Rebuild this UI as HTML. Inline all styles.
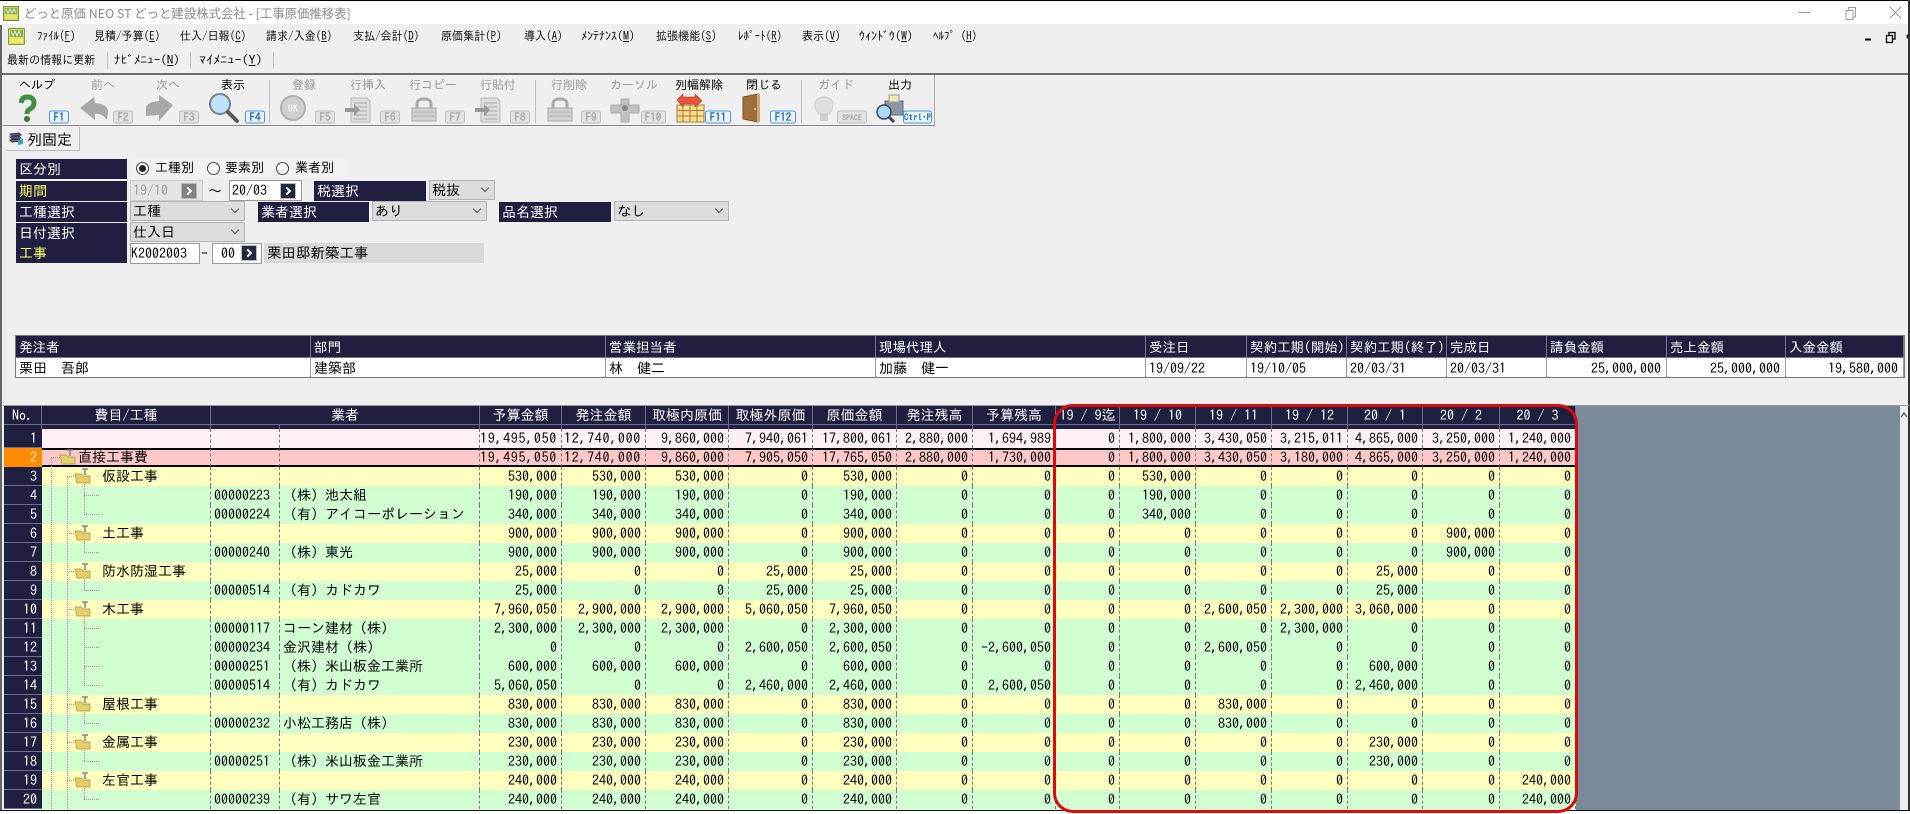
<!DOCTYPE html>
<html lang="ja"><head><meta charset="utf-8"><title>工事原価推移表</title>
<style>
html,body{margin:0;padding:0}
body{width:1910px;height:814px;overflow:hidden;background:#efefef;position:relative;font-family:"IPAGothic","Liberation Mono","Noto Sans CJK JP",monospace;color:#000}
.a{position:absolute}
#title{left:0;top:0;width:1910px;height:24px;background:#fff;border-top:1px solid #000;box-sizing:border-box}
#tt{left:24px;top:5px;font:12.4px/16px "Noto Sans CJK JP","Liberation Sans",sans-serif;color:#8a8a8a;white-space:nowrap}
.m{position:absolute;font-size:12px;line-height:14px;white-space:nowrap;transform:scaleX(.92);transform-origin:0 0;color:#111}
.sp{position:absolute;width:1px;height:17px;background:#c4c4c4;top:52px}
.lb{position:absolute;background:#1f2040;color:#fff;font-size:14px;line-height:21px;padding-left:3px;box-sizing:border-box;height:20px;white-space:nowrap;overflow:hidden}
.y{color:#ffff66}
.sel{position:absolute;height:20px;background:#dcdcdc;border:1px solid #b4b4b4;box-sizing:border-box;font-size:14px;line-height:18px;padding-left:2px}
.sel:after{content:"";position:absolute;right:6px;top:4px;width:5px;height:5px;border-right:1px solid #555;border-bottom:1px solid #555;transform:rotate(45deg)}
.inp{position:absolute;height:21px;background:#fff;border:1px solid #999;box-sizing:border-box;font-size:14px;line-height:19px;padding-left:2px}
.btn{position:absolute;width:16px;height:16px;background:#1f2a40;border:1px solid #bbb;box-sizing:border-box}
.btn:after{content:"";position:absolute;left:3px;top:4px;width:4px;height:4px;border-right:2px solid #fff;border-top:2px solid #fff;transform:rotate(45deg)}
.rd{position:absolute;width:11px;height:11px;border:1px solid #444;border-radius:50%;background:#fff;box-sizing:content-box}
.rl{position:absolute;font-size:13px;line-height:16px;white-space:nowrap}
#info{position:absolute;left:15px;top:335px;border-collapse:separate;border-spacing:0;table-layout:fixed;width:1890px;border:1px solid #777;box-sizing:border-box}
#info th{background:#1f2040;color:#fff;font-weight:normal;font-size:13.5px;height:21px;padding:0 0 0 3px;text-align:left;border-right:1px solid #778;white-space:nowrap;overflow:hidden;border-bottom:1px solid #778}
#info td{background:#fff;font-size:14px;height:19px;padding:0 0 0 3px;border-right:1px solid #999;white-space:nowrap;overflow:hidden}
#info td.r{text-align:right;padding:0 5px 0 0}
#grid{position:absolute;left:4px;top:406px;width:1572px;border-collapse:separate;border-spacing:0;table-layout:fixed;font-size:14px}
#grid th{background:#1f2040;color:#fff;font-weight:normal;height:18px;padding:0;text-align:center;border-right:1px solid #6e6e90;white-space:nowrap;overflow:hidden;line-height:17px;box-sizing:border-box}
#grid .st th{height:5px;border-top:1px solid #6e6e90;font-size:0;line-height:0}
#grid td{height:19px;padding:0 4px 0 0;text-align:right;border-right:1px dashed #777;white-space:nowrap;overflow:hidden;box-sizing:border-box;line-height:17px}
#grid td.n{background:#1f2040;color:#fff;border-right:0;border-bottom:1px solid #6e6e90;padding-right:5px}
#grid td.l{text-align:left;padding:0 0 0 3px}
#grid td.t{text-align:left;padding:0 0 0 98px;font-size:14px}
#grid td.w{letter-spacing:.7px}
.p td{background:#fff0f5}
.q td{background:#ffc8c8;border-top:2px solid #000;border-bottom:2px solid #000;line-height:15px!important}
.g td{background:#ffffc0}
.k td{background:#d2ffd2}
#grid .q td.n{background:#ff8c00;color:#ffe8c0;border-top:0;border-bottom:0;line-height:17px!important}
svg text{font-family:"IPAGothic","Noto Sans CJK JP",monospace}
</style></head><body>

<div class="a" id="title"></div>
<svg class="a" style="left:3px;top:6px" width="16" height="15" viewBox="0 0 16 15"><rect x=".5" y=".5" width="15" height="14" fill="#c9d65a" stroke="#7d8a3a"/><path d="M2 2h12v6H2z" fill="#7fae5a"/><path d="M3 3l2 4 2-4 2 4 2-4 2 4" fill="none" stroke="#e8f0c8"/><rect x="2" y="9" width="12" height="4" fill="#efe070"/></svg>
<div class="a" id="tt">どっと原価 NEO ST どっと建設株式会社 - [工事原価推移表]</div>
<svg class="a" style="left:1795px;top:4px" width="115" height="20"><path d="M4 8.500H15" stroke="#999"/><path d="M51 6.500h7v9h-7zM53.500 6V3.500H60.500V13H58" fill="none" stroke="#999"/><path d="M95 3l11 11M106 3L95 14" stroke="#999" fill="none"/></svg>

<svg class="a" style="left:8px;top:28px" width="17" height="17" viewBox="0 0 17 17"><rect x=".5" y=".5" width="16" height="16" rx="1" fill="#d4dc60" stroke="#8a9a40"/><path d="M2 2h13v7H2z" fill="#7fae5a"/><path d="M3 3l2 5 2-5 2 5 2-5 2 5" fill="none" stroke="#e8f0c8"/><rect x="2" y="10" width="13" height="5" fill="#f2e670"/></svg>
<span class="m" style="left:37px;top:29px">ﾌｧｲﾙ(<u>F</u>)</span>
<span class="m" style="left:94px;top:29px">見積/予算(<u>E</u>)</span>
<span class="m" style="left:180px;top:29px">仕入/日報(<u>C</u>)</span>
<span class="m" style="left:266px;top:29px">請求/入金(<u>B</u>)</span>
<span class="m" style="left:353px;top:29px">支払/会計(<u>D</u>)</span>
<span class="m" style="left:441px;top:29px">原価集計(<u>P</u>)</span>
<span class="m" style="left:524px;top:29px">導入(<u>A</u>)</span>
<span class="m" style="left:581px;top:29px;transform:scaleX(1)">ﾒﾝﾃﾅﾝｽ(<u>M</u>)</span>
<span class="m" style="left:656px;top:29px">拡張機能(<u>S</u>)</span>
<span class="m" style="left:738px;top:29px">ﾚﾎﾟｰﾄ(<u>R</u>)</span>
<span class="m" style="left:802px;top:29px">表示(<u>V</u>)</span>
<span class="m" style="left:859px;top:29px;transform:scaleX(1)">ｳｨﾝﾄﾞｳ(<u>W</u>)</span>
<span class="m" style="left:933px;top:29px">ﾍﾙﾌﾟ (<u>H</u>)</span>
<svg class="a" style="left:1860px;top:29px" width="50" height="16"><path d="M5 10.500h6" stroke="#000" stroke-width="2"/><path d="M26.500 6.500h6v7h-6zM29 6V3.500H35V10H33" fill="none" stroke="#000" stroke-width="1.300"/><path d="M47 6l3 3M50 6l-3 3" stroke="#000" stroke-width="2"/></svg>

<span class="m" style="left:7px;top:53px">最新の情報に更新</span><i class="sp" style="left:107px"></i>
<span class="m" style="left:114px;top:53px;transform:scaleX(1.1)">ﾅﾋﾞﾒﾆｭｰ(<u>N</u>)</span><i class="sp" style="left:190px"></i>
<span class="m" style="left:199px;top:53px;transform:scaleX(1.18)">ﾏｲﾒﾆｭｰ(<u>Y</u>)</span><i class="sp" style="left:273px"></i>

<div class="a" style="left:0;top:73px;width:1910px;height:2px;background:#6e6e6e"></div>
<div class="a" style="left:3px;top:75px;width:932px;height:51px;border-right:1px solid #aaa;border-bottom:1px solid #888;box-sizing:border-box"></div>
<div class="a" style="left:0;top:25px;width:2px;height:785px;background:#666"></div>
<div class="a" style="left:1908px;top:0;width:2px;height:810px;background:#333"></div>

<svg class="a" style="left:0;top:75px" width="940" height="52" viewBox="0 75 940 52">
<defs>
<g id="docu"><path d="M6 1h16l3 3v21H6z" fill="#dcdcdc" stroke="#b8b8b8"/><path d="M9 6h13M9 10h13M9 14h13M9 18h13M9 22h13" stroke="#aaa"/><path d="M0 11h9V7l6 6-6 6v-4H0z" fill="#999"/></g>
<g id="lock"><path d="M7 12V7q0-5 7-5t7 5v5" fill="none" stroke="#aaa" stroke-width="3"/><rect x="2" y="11" width="24" height="13" fill="#d0d0d0" stroke="#aaa"/><path d="M4 15h20M4 19h20" stroke="#b5b5b5"/></g>
</defs>
<g font-size="12" text-anchor="middle">
<text x="37" y="89" fill="#000">ヘルプ</text>
<text x="103" y="89" fill="#999">前へ</text>
<text x="168" y="89" fill="#999">次へ</text>
<text x="233" y="89" fill="#000">表示</text>
<text x="304" y="89" fill="#999">登録</text>
<text x="368" y="89" fill="#999">行挿入</text>
<text x="433" y="89" fill="#999">行コピー</text>
<text x="498" y="89" fill="#999">行貼付</text>
<text x="569" y="89" fill="#999">行削除</text>
<text x="634" y="89" fill="#999">カーソル</text>
<text x="699" y="89" fill="#000">列幅解除</text>
<text x="764" y="89" fill="#000">閉じる</text>
<text x="836" y="89" fill="#999">ガイド</text>
<text x="900" y="89" fill="#000">出力</text>
</g>
<path d="M269.500 80v43M535.500 80v43M801.500 80v43" stroke="#bdbdbd"/>
<path d="M21 103q1-6 6-6 7 0 7 6 0 4-4 6-3 1.500-3 5" fill="none" stroke="#3f8f3f" stroke-width="5"/><circle cx="27" cy="119" r="3" fill="#2f7a34"/>
<path d="M80 108L94 97l1 6q12 1 13 8l-1 9q-5-7-12-6v6z" fill="#a8a8a8"/>
<path d="M173 105L159 95v6q-11 1-13 6v9l13-1v6z" fill="#a8a8a8"/>
<circle cx="220" cy="104" r="10" fill="#bfe4fa" stroke="#77818a" stroke-width="2"/><path d="M228 112l9 9" stroke="#5a5a5a" stroke-width="4" stroke-linecap="round"/>
<circle cx="293" cy="108" r="12" fill="#cfcfcf" stroke="#b0b0b0" stroke-width="2"/><text x="293" y="112" font-size="10" font-weight="bold" fill="#f2f2f2" text-anchor="middle">OK</text>
<use href="#docu" x="345" y="97"/><use href="#lock" x="410" y="97"/><use href="#docu" x="475" y="97"/><use href="#lock" x="546" y="97"/>
<path d="M621 99h8v6h10v8h-10v9h-8v-9h-10v-8h10z" fill="#c0c0c0" stroke="#aaa"/><circle cx="625" cy="108" r="3" fill="#888"/>
<g><rect x="677" y="105" width="27" height="17" fill="#f5e38a" stroke="#a07a50"/><path d="M677 110.500h27M677 116h27M683 105v17M690 105v17M697 105v17" stroke="#c06a40"/><path d="M677 100l6-6v3h12v-3l7 7-7 6v-3h-12v3z" fill="#e8533a" stroke="#b03020" stroke-width=".6"/></g>
<path d="M743 97l15-3v28l-15-3z" fill="#a26f3c" stroke="#7a5228"/><rect x="757" y="94" width="3" height="28" fill="#caa878"/><circle cx="755" cy="109" r="1" fill="#e8d080"/>
<path d="M819 114q-4-5-4-9 0-8 9-8t9 8q0 4-4 9z" fill="#dedede" stroke="#cfcfcf"/><rect x="820" y="114" width="8" height="7" fill="#cfcfcf"/>
<rect x="885" y="101" width="18" height="14" fill="#8a97a3" stroke="#667"/><rect x="889" y="95" width="10" height="7" fill="#eee8b0" stroke="#999"/><circle cx="884" cy="112" r="7" fill="#a9daf5" stroke="#445" stroke-width="1.500"/><path d="M889 117l5 5" stroke="#444" stroke-width="3"/>
<g font-size="11" font-weight="bold" text-anchor="middle" font-family="Liberation Sans">
<g fill="#e9f4ff" stroke="#4a96dc"><rect x="49.500" y="111" width="19" height="12" rx="2"/><rect x="245.500" y="111" width="19" height="12" rx="2"/><rect x="705.500" y="111" width="25" height="12" rx="2"/><rect x="770.500" y="111" width="25" height="12" rx="2"/><rect x="903.500" y="111" width="28" height="12" rx="2"/></g>
<g fill="#e2e2e2" stroke="#bdbdbd"><rect x="113.500" y="111" width="19" height="12" rx="2"/><rect x="179.500" y="111" width="19" height="12" rx="2"/><rect x="315.500" y="111" width="19" height="12" rx="2"/><rect x="380.500" y="111" width="19" height="12" rx="2"/><rect x="445.500" y="111" width="19" height="12" rx="2"/><rect x="510.500" y="111" width="19" height="12" rx="2"/><rect x="581.500" y="111" width="19" height="12" rx="2"/><rect x="641.500" y="111" width="24" height="12" rx="2"/><rect x="837.500" y="111" width="29" height="12" rx="2"/></g>
<g fill="#2f74bd"><text x="59" y="121">F1</text><text x="255" y="121">F4</text><text x="718" y="121">F11</text><text x="783" y="121">F12</text><text x="917.500" y="120.500" font-size="9">Ctrl·P</text></g>
<g fill="#aaa"><text x="123" y="121">F2</text><text x="189" y="121">F3</text><text x="325" y="121">F5</text><text x="390" y="121">F6</text><text x="455" y="121">F7</text><text x="520" y="121">F8</text><text x="591" y="121">F9</text><text x="653" y="121">F10</text><text x="852" y="120.500" font-size="8">SPACE</text></g>
</g>
</svg>

<div class="a" style="left:6px;top:127px;width:74px;height:24px;background:#f0f0f0;border-right:1px solid #bbb;border-bottom:1px solid #bbb;box-sizing:border-box"></div>
<svg class="a" style="left:9px;top:132px" width="16" height="14"><path d="M1 2l9-1 2 2-9 1zM1 5l9-1 2 2-9 1zM1 8l9-1 2 2-9 1z" fill="#5a6a9a" stroke="#334"/><path d="M9 8l5-1v5l-5 1z" fill="#3aa0c8"/></svg>
<span class="a" style="left:27px;top:131px;font-size:15px;line-height:17px">列固定</span>

<div class="lb" style="left:16px;top:159px;width:111px">区分別</div>
<div class="a" style="left:130px;top:159px;width:216px;height:18px;background:#f2f2f2"></div>
<span class="rd" style="left:136px;top:162px"></span><span class="a" style="left:139px;top:165px;width:7px;height:7px;border-radius:50%;background:#222"></span>
<span class="rl" style="left:155px;top:160px">工種別</span>
<span class="rd" style="left:207px;top:162px"></span><span class="rl" style="left:225px;top:160px">要素別</span>
<span class="rd" style="left:276px;top:162px"></span><span class="rl" style="left:295px;top:160px">業者別</span>

<div class="lb y" style="left:16px;top:181px;width:111px">期間</div>
<div class="a" style="left:130px;top:180px;width:73px;height:21px;background:#e4e4e4;border:1px solid #ccc;box-sizing:border-box;font-size:14px;line-height:19px;padding-left:2px;color:#999">19/10</div>
<div class="btn" style="left:181px;top:183px;background:#808080"></div>
<span class="a" style="left:208px;top:182px;font-size:14px;line-height:18px">～</span>
<div class="inp" style="left:229px;top:180px;width:73px">20/03</div>
<div class="btn" style="left:280px;top:183px"></div>
<div class="lb" style="left:314px;top:181px;width:112px">税選択</div>
<div class="sel" style="left:429px;top:180px;width:66px">税抜</div>

<div class="lb" style="left:16px;top:202px;width:111px">工種選択</div>
<div class="sel" style="left:130px;top:201px;width:115px">工種</div>
<div class="lb" style="left:258px;top:202px;width:111px">業者選択</div>
<div class="sel" style="left:372px;top:201px;width:115px">あり</div>
<div class="lb" style="left:499px;top:202px;width:112px">品名選択</div>
<div class="sel" style="left:614px;top:201px;width:115px">なし</div>

<div class="lb" style="left:16px;top:223px;width:111px">日付選択</div>
<div class="sel" style="left:130px;top:222px;width:115px">仕入日</div>

<div class="lb y" style="left:16px;top:243px;width:111px">工事</div>
<div class="inp" style="left:130px;top:243px;width:70px;padding-left:0">K2002003</div>
<span class="a" style="left:201px;top:244px;font-size:14px;line-height:18px">-</span>
<div class="inp" style="left:212px;top:243px;width:50px;padding-left:8px">00</div>
<div class="btn" style="left:241px;top:245px"></div>
<div class="a" style="left:264px;top:243px;width:220px;height:20px;background:#d9d9d9;font-size:14.5px;line-height:20px;padding-left:3px;box-sizing:border-box">栗田邸新築工事</div>

<table id="info"><colgroup><col style="width:295px"><col style="width:295px"><col style="width:270px"><col style="width:270px"><col style="width:101px"><col style="width:100px"><col style="width:100px"><col style="width:100px"><col style="width:120px"><col style="width:119px"><col></colgroup>
<tr><th>発注者</th><th>部門</th><th>営業担当者</th><th>現場代理人</th><th>受注日</th><th>契約工期(開始)</th><th>契約工期(終了)</th><th>完成日</th><th>請負金額</th><th>売上金額</th><th>入金金額</th></tr>
<tr><td>栗田　吾郎</td><td>建築部</td><td>林　健二</td><td>加藤　健一</td><td>19/09/22</td><td>19/10/05</td><td>20/03/31</td><td>20/03/31</td><td class="r">25,000,000</td><td class="r">25,000,000</td><td class="r">19,580,000</td></tr>
</table>

<div class="a" style="left:3px;top:405px;width:1907px;height:1px;background:#999"></div>
<div class="a" style="left:1576px;top:406px;width:324px;height:404px;background:#7a8a9a"></div>
<div class="a" style="left:1900px;top:406px;width:8px;height:404px;background:#eeeeee"></div>
<svg class="a" style="left:1900px;top:410px" width="8" height="10"><path d="M1 7l3-4 3 4" fill="none" stroke="#555" stroke-width="1.300"/></svg>

<table id="grid"><colgroup><col style="width:38px"><col style="width:169px"><col style="width:69px"><col style="width:200px"><col style="width:82px"><col style="width:84px"><col style="width:83px"><col style="width:84px"><col style="width:84px"><col style="width:76px"><col style="width:83px"><col style="width:64px"><col style="width:76px"><col style="width:76px"><col style="width:76px"><col style="width:75px"><col style="width:77px"><col style="width:76px"></colgroup>
<tr><th>No.</th><th>費目/工種</th><th colspan="2">業者</th><th>予算金額</th><th>発注金額</th><th>取極内原価</th><th>取極外原価</th><th>原価金額</th><th>発注残高</th><th>予算残高</th><th>19 / 9迄</th><th>19 / 10</th><th>19 / 11</th><th>19 / 12</th><th>20 / 1</th><th>20 / 2</th><th>20 / 3</th></tr>
<tr class="st"><th></th><th></th><th></th><th></th><th></th><th></th><th></th><th></th><th></th><th></th><th></th><th></th><th></th><th></th><th></th><th></th><th></th><th></th></tr>
<tr class="p"><td class="n">1</td><td class="l"></td><td class="l"></td><td class="l"></td><td class="w">19,495,050</td><td class="w">12,740,000</td><td>9,860,000</td><td>7,940,061</td><td>17,800,061</td><td>2,880,000</td><td>1,694,989</td><td>0</td><td>1,800,000</td><td>3,430,050</td><td>3,215,011</td><td>4,865,000</td><td>3,250,000</td><td>1,240,000</td></tr>
<tr class="q"><td class="n">2</td><td class="t" style="padding-left:36px">直接工事費</td><td class="l"></td><td class="l"></td><td class="w">19,495,050</td><td class="w">12,740,000</td><td>9,860,000</td><td>7,905,050</td><td>17,765,050</td><td>2,880,000</td><td>1,730,000</td><td>0</td><td>1,800,000</td><td>3,430,050</td><td>3,180,000</td><td>4,865,000</td><td>3,250,000</td><td>1,240,000</td></tr>
<tr class="g"><td class="n">3</td><td class="t" style="padding-left:60px">仮設工事</td><td class="l"></td><td class="l"></td><td>530,000</td><td>530,000</td><td>530,000</td><td>0</td><td>530,000</td><td>0</td><td>0</td><td>0</td><td>530,000</td><td>0</td><td>0</td><td>0</td><td>0</td><td>0</td></tr>
<tr class="k"><td class="n">4</td><td class="l"></td><td class="l">00000223</td><td class="l">（株）池太組</td><td>190,000</td><td>190,000</td><td>190,000</td><td>0</td><td>190,000</td><td>0</td><td>0</td><td>0</td><td>190,000</td><td>0</td><td>0</td><td>0</td><td>0</td><td>0</td></tr>
<tr class="k"><td class="n">5</td><td class="l"></td><td class="l">00000224</td><td class="l">（有）アイコーポレーション</td><td>340,000</td><td>340,000</td><td>340,000</td><td>0</td><td>340,000</td><td>0</td><td>0</td><td>0</td><td>340,000</td><td>0</td><td>0</td><td>0</td><td>0</td><td>0</td></tr>
<tr class="g"><td class="n">6</td><td class="t" style="padding-left:60px">土工事</td><td class="l"></td><td class="l"></td><td>900,000</td><td>900,000</td><td>900,000</td><td>0</td><td>900,000</td><td>0</td><td>0</td><td>0</td><td>0</td><td>0</td><td>0</td><td>0</td><td>900,000</td><td>0</td></tr>
<tr class="k"><td class="n">7</td><td class="l"></td><td class="l">00000240</td><td class="l">（株）東光</td><td>900,000</td><td>900,000</td><td>900,000</td><td>0</td><td>900,000</td><td>0</td><td>0</td><td>0</td><td>0</td><td>0</td><td>0</td><td>0</td><td>900,000</td><td>0</td></tr>
<tr class="g"><td class="n">8</td><td class="t" style="padding-left:60px">防水防湿工事</td><td class="l"></td><td class="l"></td><td>25,000</td><td>0</td><td>0</td><td>25,000</td><td>25,000</td><td>0</td><td>0</td><td>0</td><td>0</td><td>0</td><td>0</td><td>25,000</td><td>0</td><td>0</td></tr>
<tr class="k"><td class="n">9</td><td class="l"></td><td class="l">00000514</td><td class="l">（有）カドカワ</td><td>25,000</td><td>0</td><td>0</td><td>25,000</td><td>25,000</td><td>0</td><td>0</td><td>0</td><td>0</td><td>0</td><td>0</td><td>25,000</td><td>0</td><td>0</td></tr>
<tr class="g"><td class="n">10</td><td class="t" style="padding-left:60px">木工事</td><td class="l"></td><td class="l"></td><td>7,960,050</td><td>2,900,000</td><td>2,900,000</td><td>5,060,050</td><td>7,960,050</td><td>0</td><td>0</td><td>0</td><td>0</td><td>2,600,050</td><td>2,300,000</td><td>3,060,000</td><td>0</td><td>0</td></tr>
<tr class="k"><td class="n">11</td><td class="l"></td><td class="l">00000117</td><td class="l">コーン建材（株）</td><td>2,300,000</td><td>2,300,000</td><td>2,300,000</td><td>0</td><td>2,300,000</td><td>0</td><td>0</td><td>0</td><td>0</td><td>0</td><td>2,300,000</td><td>0</td><td>0</td><td>0</td></tr>
<tr class="k"><td class="n">12</td><td class="l"></td><td class="l">00000234</td><td class="l">金沢建材（株）</td><td>0</td><td>0</td><td>0</td><td>2,600,050</td><td>2,600,050</td><td>0</td><td>-2,600,050</td><td>0</td><td>0</td><td>2,600,050</td><td>0</td><td>0</td><td>0</td><td>0</td></tr>
<tr class="k"><td class="n">13</td><td class="l"></td><td class="l">00000251</td><td class="l">（株）米山板金工業所</td><td>600,000</td><td>600,000</td><td>600,000</td><td>0</td><td>600,000</td><td>0</td><td>0</td><td>0</td><td>0</td><td>0</td><td>0</td><td>600,000</td><td>0</td><td>0</td></tr>
<tr class="k"><td class="n">14</td><td class="l"></td><td class="l">00000514</td><td class="l">（有）カドカワ</td><td>5,060,050</td><td>0</td><td>0</td><td>2,460,000</td><td>2,460,000</td><td>0</td><td>2,600,050</td><td>0</td><td>0</td><td>0</td><td>0</td><td>2,460,000</td><td>0</td><td>0</td></tr>
<tr class="g"><td class="n">15</td><td class="t" style="padding-left:60px">屋根工事</td><td class="l"></td><td class="l"></td><td>830,000</td><td>830,000</td><td>830,000</td><td>0</td><td>830,000</td><td>0</td><td>0</td><td>0</td><td>0</td><td>830,000</td><td>0</td><td>0</td><td>0</td><td>0</td></tr>
<tr class="k"><td class="n">16</td><td class="l"></td><td class="l">00000232</td><td class="l">小松工務店（株）</td><td>830,000</td><td>830,000</td><td>830,000</td><td>0</td><td>830,000</td><td>0</td><td>0</td><td>0</td><td>0</td><td>830,000</td><td>0</td><td>0</td><td>0</td><td>0</td></tr>
<tr class="g"><td class="n">17</td><td class="t" style="padding-left:60px">金属工事</td><td class="l"></td><td class="l"></td><td>230,000</td><td>230,000</td><td>230,000</td><td>0</td><td>230,000</td><td>0</td><td>0</td><td>0</td><td>0</td><td>0</td><td>0</td><td>230,000</td><td>0</td><td>0</td></tr>
<tr class="k"><td class="n">18</td><td class="l"></td><td class="l">00000251</td><td class="l">（株）米山板金工業所</td><td>230,000</td><td>230,000</td><td>230,000</td><td>0</td><td>230,000</td><td>0</td><td>0</td><td>0</td><td>0</td><td>0</td><td>0</td><td>230,000</td><td>0</td><td>0</td></tr>
<tr class="g"><td class="n">19</td><td class="t" style="padding-left:60px">左官工事</td><td class="l"></td><td class="l"></td><td>240,000</td><td>240,000</td><td>240,000</td><td>0</td><td>240,000</td><td>0</td><td>0</td><td>0</td><td>0</td><td>0</td><td>0</td><td>0</td><td>0</td><td>240,000</td></tr>
<tr class="k"><td class="n">20</td><td class="l"></td><td class="l">00000239</td><td class="l">（有）サワ左官</td><td>240,000</td><td>240,000</td><td>240,000</td><td>0</td><td>240,000</td><td>0</td><td>0</td><td>0</td><td>0</td><td>0</td><td>0</td><td>0</td><td>0</td><td>240,000</td></tr>
</table>

<svg class="a" style="left:0;top:0;pointer-events:none" width="1910" height="814">
<defs><g id="fd"><path d="M0 6h6l2 2h7v7H2z" fill="#e6cf6a" stroke="#a8944a" stroke-width=".7"/><path d="M7 1h6M10 1v6" stroke="#888" stroke-width="1.600"/></g></defs>
<path d="M51.500 458V810M67.500 477V810M51 457.500h9M67 476.500h8M67 533.500h8M67 571.500h8M67 609.500h8M67 704.500h8M67 742.500h8M67 780.500h8M84.500 484V514M84.500 541V552M84.500 579V590M84.500 617V685M84.500 712V723M84.500 750V761M84.500 788V799M84 495.500h16M84 514.500h16M84 552.500h16M84 590.500h16M84 628.500h16M84 647.500h16M84 666.500h16M84 685.500h16M84 723.500h16M84 761.500h16M84 799.500h16" stroke="#999" stroke-dasharray="1 1" fill="none"/>
<use href="#fd" x="60" y="449"/><use href="#fd" x="75" y="468"/><use href="#fd" x="75" y="525"/><use href="#fd" x="75" y="563"/><use href="#fd" x="75" y="601"/><use href="#fd" x="75" y="696"/><use href="#fd" x="75" y="734"/><use href="#fd" x="75" y="772"/>
</svg>

<div class="a" style="left:0;top:810px;width:1910px;height:1px;background:#111"></div>
<div class="a" style="left:0;top:811px;width:1910px;height:3px;background:#fff"></div>
<div class="a" style="left:1053px;top:404px;width:525px;height:409px;border:3px solid #dd0a0a;border-radius:20px;box-sizing:border-box"></div>
</body></html>
